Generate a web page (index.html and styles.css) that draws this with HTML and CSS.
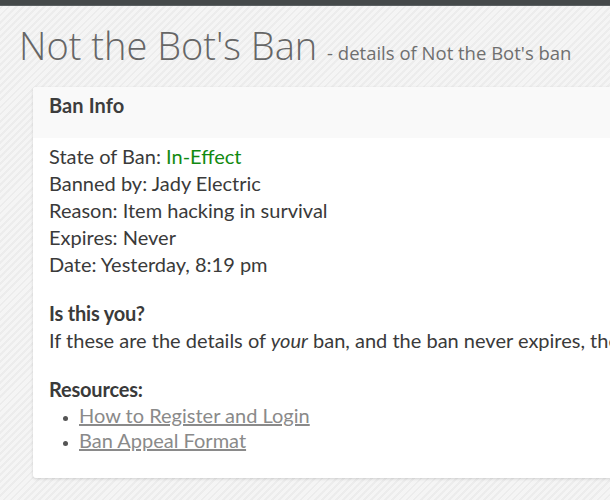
FILE: index.html
```html
<!DOCTYPE html>
<html>
<head>
<meta charset="utf-8">
<link rel="stylesheet" href="styles.css">
</head>
<body>
<div class="topbar"></div>
<div class="page">
  <h1 class="title">Not the Bot's Ban <small class="subtitle">- details of Not the Bot's ban</small></h1>
  <div class="card">
    <div class="card-head">Ban Info</div>
    <div class="card-body">
      <div class="line">State of Ban: <span class="ok">In-Effect</span></div>
      <div class="line">Banned by: Jady Electric</div>
      <div class="line">Reason: Item hacking in survival</div>
      <div class="line">Expires: Never</div>
      <div class="line">Date: Yesterday, 8:19 pm</div>
      <div class="gap"></div>
      <div class="line strong">Is this you?</div>
      <div class="line">If these are the details of <em>your</em> ban, and the ban never expires, then you may appeal it.</div>
      <div class="gap"></div>
      <div class="line strong">Resources:</div>
      <ul class="links">
        <li><a href="#">How to Register and Login</a></li>
        <li><a href="#">Ban Appeal Format</a></li>
      </ul>
    </div>
  </div>
</div>
</body>
</html>
```

FILE: styles.css
```css
html, body {
  margin: 0;
  padding: 0;
  height: 100%;
  overflow: hidden;
}
body {
  background-color: #f1f1f1;
  background-image: repeating-linear-gradient(135deg, rgba(0,0,0,0.018) 0px, rgba(0,0,0,0.018) 2px, rgba(255,255,255,0.25) 2px, rgba(255,255,255,0.25) 5px);
  font-family: Lato, "Open Sans", sans-serif;
  color: #3a3a3a;
}
.topbar {
  height: 5px;
  background: #45494a;
  border-bottom: 1px solid #5c6163;
}
.page {
  padding: 0 0 0 19px;
}
.title {
  margin: 14px 0 0 0;
  font-family: "Open Sans", sans-serif;
  font-weight: 300;
  font-size: 38px;
  line-height: 50px;
  color: #666;
  white-space: nowrap;
}
.subtitle {
  font-size: 18.5px;
  font-weight: 400;
  color: #6f6f6f;
  margin-left: 0;
}
.card {
  margin: 9px 0 0 14px;
  background: #fff;
  border-radius: 3px 0 0 3px;
  box-shadow: 0 1px 3px rgba(0,0,0,0.15);
  width: 600px;
  overflow: hidden;
}
.card-head {
  background: #f9f9f9;
  padding: 0 16px;
  height: 51px;
  line-height: 36px;
  font-size: 20px;
  font-weight: 700;
  color: #3d3d3d;
  letter-spacing: 0.1px;
}
.card-body {
  padding: 5px 16px 25px 16px;
  font-size: 20px;
  line-height: 27px;
}
.line { white-space: nowrap; }
.strong { font-weight: 700; font-size: 20px; letter-spacing: -0.2px; }
.gap { height: 22px; }
.ok { color: #118a11; }
em { font-style: italic; }
.links {
  margin: 0;
  padding-left: 30px;
  line-height: 25px;
}
.links a {
  color: #8a8a8a;
  text-decoration: underline;
}
.links li::marker { color: #555; font-size: 14px; }
```
